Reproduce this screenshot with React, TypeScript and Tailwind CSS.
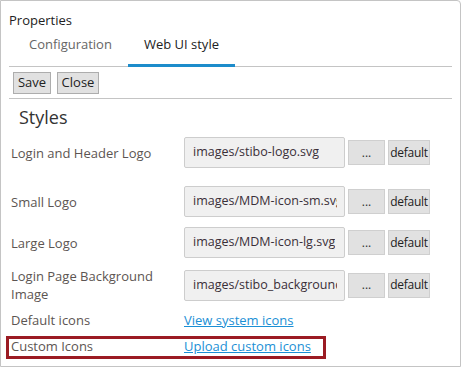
const rows = [
  { label: "Login and Header Logo", value: "images/stibo-logo.svg", mt: "mt-[8px]" },
  { label: "Small Logo", value: "images/MDM-icon-sm.svg", mt: "mt-[18px]" },
  { label: "Large Logo", value: "images/MDM-icon-lg.svg", mt: "mt-[10px]" },
  { label: "Login Page Background Image", value: "images/stibo_background.jpg", mt: "mt-[9px]" },
];

function FileRow({ label, value, mt }: { label: string; value: string; mt: string }) {
  return (
    <div className={`flex items-center ${mt}`}>
      <div className="w-[173px] pr-2 text-[13px] leading-[18px] text-[#5c5552]">{label}</div>
      <div className="flex h-[31px] w-[161px] items-center rounded-[2px] border border-[#cdcdcd] bg-[#f0f0f0] pl-[8px] pr-[7px] text-[12.5px] text-[#3a2f38]">
        <div className="overflow-hidden whitespace-nowrap">{value}</div>
      </div>
      <button className="ml-[3px] h-[25px] w-[37px] border border-[#cfcfcf] bg-[#e1e1e1] text-[12px] text-[#333]">
        ...
      </button>
      <button className="ml-[3px] h-[25px] w-[42px] overflow-hidden whitespace-nowrap border border-[#cfcfcf] bg-[#e1e1e1] p-0 text-[12px] tracking-[-0.3px] text-[#222]">
        default
      </button>
    </div>
  );
}

export default function App() {
  return (
    <div className="relative h-[368px] w-[462px] bg-white font-['Open_Sans',sans-serif]">
      <div className="h-[367px] w-[461px] rounded-tr-[4px] border border-[#c4c4c4] px-[8px]">
        <div className="pt-[10px] text-[13px] leading-[18px] text-[#222]">Properties</div>

        <div className="mt-[2px] flex border-b border-[#c4c4c4] pl-[4px]">
          <div className="px-[16px] pb-[12px] pt-[3px] text-[13px] leading-[20px] text-[#666]">
            Configuration
          </div>
          <div className="-mb-[1px] border-b-[3px] border-[#1d8ccb] px-[16px] pb-[10px] pt-[3px] text-[13px] leading-[20px] text-[#222]">
            Web UI style
          </div>
        </div>

        <div className="flex gap-[6px] border-b border-[#c4c4c4] pb-[4px] pl-[4px] pt-[5px]">
          <button className="h-[22px] w-[38px] border border-[#adadad] bg-[#e1e1e1] text-[13px] text-[#222]">
            Save
          </button>
          <button className="h-[22px] w-[42px] border border-[#adadad] bg-[#e1e1e1] text-[13px] text-[#222]">
            Close
          </button>
        </div>

        <div className="pl-[10px] pt-[6px] text-[18px] leading-[24px] text-[#333]">Styles</div>

        <div className="pl-[2px]">
          {rows.map((r) => (
            <FileRow key={r.label} {...r} />
          ))}

          <div className="mt-[8px] flex items-center">
            <div className="w-[173px] text-[13px] leading-[18px] text-[#5c5552]">Default icons</div>
            <a className="text-[13px] leading-[18px] text-[#1b8fd5] underline">View system icons</a>
          </div>
          <div className="mt-[8px] flex items-center">
            <div className="w-[173px] text-[13px] leading-[18px] text-[#5c5552]">Custom Icons</div>
            <a className="text-[13px] leading-[18px] text-[#1b8fd5] underline">Upload custom icons</a>
          </div>
        </div>
      </div>
      <div className="absolute left-[6px] top-[336px] h-[23px] w-[320px] border-[3px] border-[#9b1b23]" />
    </div>
  );
}
